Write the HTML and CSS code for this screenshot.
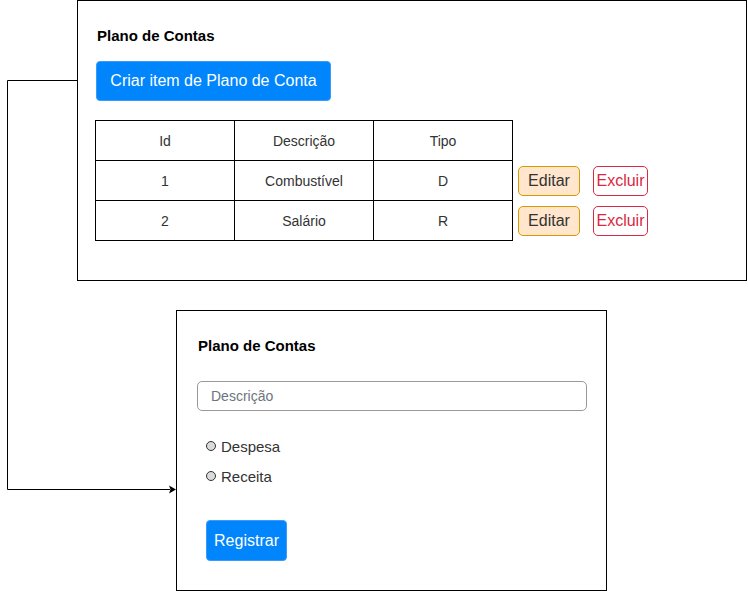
FILE: index.html
```html
<!DOCTYPE html>
<html lang="pt">
<head>
<meta charset="utf-8">
<title>Plano de Contas</title>
<link rel="stylesheet" href="styles.css">
</head>
<body>
<div class="canvas">
  <svg class="connector" width="748" height="591" viewBox="0 0 748 591">
    <path d="M77 80.5 H7.5 V489.5 H170" fill="none" stroke="#000" stroke-width="1"/>
    <polygon points="169,485.5 176,489.5 169,493.5 170.5,489.5" fill="#000"/>
  </svg>

  <section class="frame frame-list">
    <h2 class="title">Plano de Contas</h2>
    <button class="btn btn-primary btn-create">Criar item de Plano de Conta</button>
    <div class="table-area">
      <div class="table">
        <div class="cell">Id</div>
        <div class="cell">Descrição</div>
        <div class="cell">Tipo</div>
        <div class="cell">1</div>
        <div class="cell">Combustível</div>
        <div class="cell">D</div>
        <div class="cell">2</div>
        <div class="cell">Salário</div>
        <div class="cell">R</div>
      </div>
      <div class="actions">
        <div class="action-row">
          <button class="btn btn-edit">Editar</button>
          <button class="btn btn-delete">Excluir</button>
        </div>
        <div class="action-row">
          <button class="btn btn-edit">Editar</button>
          <button class="btn btn-delete">Excluir</button>
        </div>
      </div>
    </div>
  </section>

  <section class="frame frame-form">
    <h2 class="title title-form">Plano de Contas</h2>
    <div class="input">Descrição</div>
    <div class="radios">
      <div class="radio"><span class="dot"></span>Despesa</div>
      <div class="radio"><span class="dot"></span>Receita</div>
    </div>
    <button class="btn btn-primary btn-register">Registrar</button>
  </section>
</div>
</body>
</html>
```

FILE: styles.css
```css
* { box-sizing: border-box; }
html, body { margin: 0; padding: 0; background: #fff; }
body { font-family: "Liberation Sans", Arial, sans-serif; color: #333; }

.canvas {
  position: relative;
  width: 748px;
  height: 591px;
  overflow: hidden;
}

.connector {
  position: absolute;
  left: 0;
  top: 0;
}

.frame {
  position: absolute;
  border: 1px solid #000;
  background: #fff;
  display: flex;
  flex-direction: column;
  align-items: flex-start;
}

.frame-list {
  left: 77px;
  top: 0;
  width: 670px;
  height: 281px;
  padding: 27px 0 0 17px;
}

.frame-form {
  left: 176px;
  top: 310px;
  width: 431px;
  height: 281px;
  padding: 27px 0 0 20px;
}

.title {
  margin: 0 0 0 2px;
  font-size: 15px;
  line-height: 16px;
  font-weight: bold;
  color: #000;
}
.title-form { margin-left: 1px; }

.btn {
  font-family: "Liberation Sans", Arial, sans-serif;
  font-size: 16px;
  padding: 0;
  border-radius: 4px;
  display: flex;
  align-items: center;
  justify-content: center;
  cursor: pointer;
}

.btn-primary {
  background: #0085fc;
  border: 1px solid #3a9bf9;
  color: #fff;
}

.btn-create {
  margin: 17px 0 0 1px;
  width: 235px;
  height: 40px;
}

.table-area {
  margin-top: 19px;
  display: flex;
}

.table {
  display: grid;
  grid-template-columns: 139px 139px 139px;
  grid-auto-rows: 40px;
  border-top: 1px solid #000;
  border-left: 1px solid #000;
}

.cell {
  border-right: 1px solid #000;
  border-bottom: 1px solid #000;
  display: flex;
  align-items: center;
  justify-content: center;
  font-size: 14px;
  color: #333;
}

.actions {
  padding-top: 41px;
  display: flex;
  flex-direction: column;
}

.action-row {
  height: 40px;
  display: flex;
  align-items: center;
  gap: 13px;
  padding-left: 5px;
}

.btn-edit {
  width: 62px;
  height: 30px;
  background: #ffe6cc;
  border: 1px solid #d79b00;
  color: #333;
  border-radius: 5px;
}

.btn-delete {
  width: 55px;
  height: 30px;
  background: #fff;
  border: 1px solid #db2843;
  color: #db2843;
  border-radius: 5px;
}

.input {
  margin-top: 27px;
  width: 390px;
  height: 30px;
  border: 1px solid #999;
  border-radius: 5px;
  padding-left: 13px;
  display: flex;
  align-items: center;
  font-size: 14px;
  color: #6c757d;
}

.radios {
  margin: 20px 0 0 9px;
  display: flex;
  flex-direction: column;
}

.radio {
  height: 30px;
  display: flex;
  align-items: center;
  font-size: 15px;
  color: #333;
}

.dot {
  width: 10px;
  height: 10px;
  border: 1px solid #333;
  border-radius: 50%;
  background: #dadada;
  margin-right: 5px;
}

.btn-register {
  margin: 29px 0 0 9px;
  width: 81px;
  height: 41px;
}
```
